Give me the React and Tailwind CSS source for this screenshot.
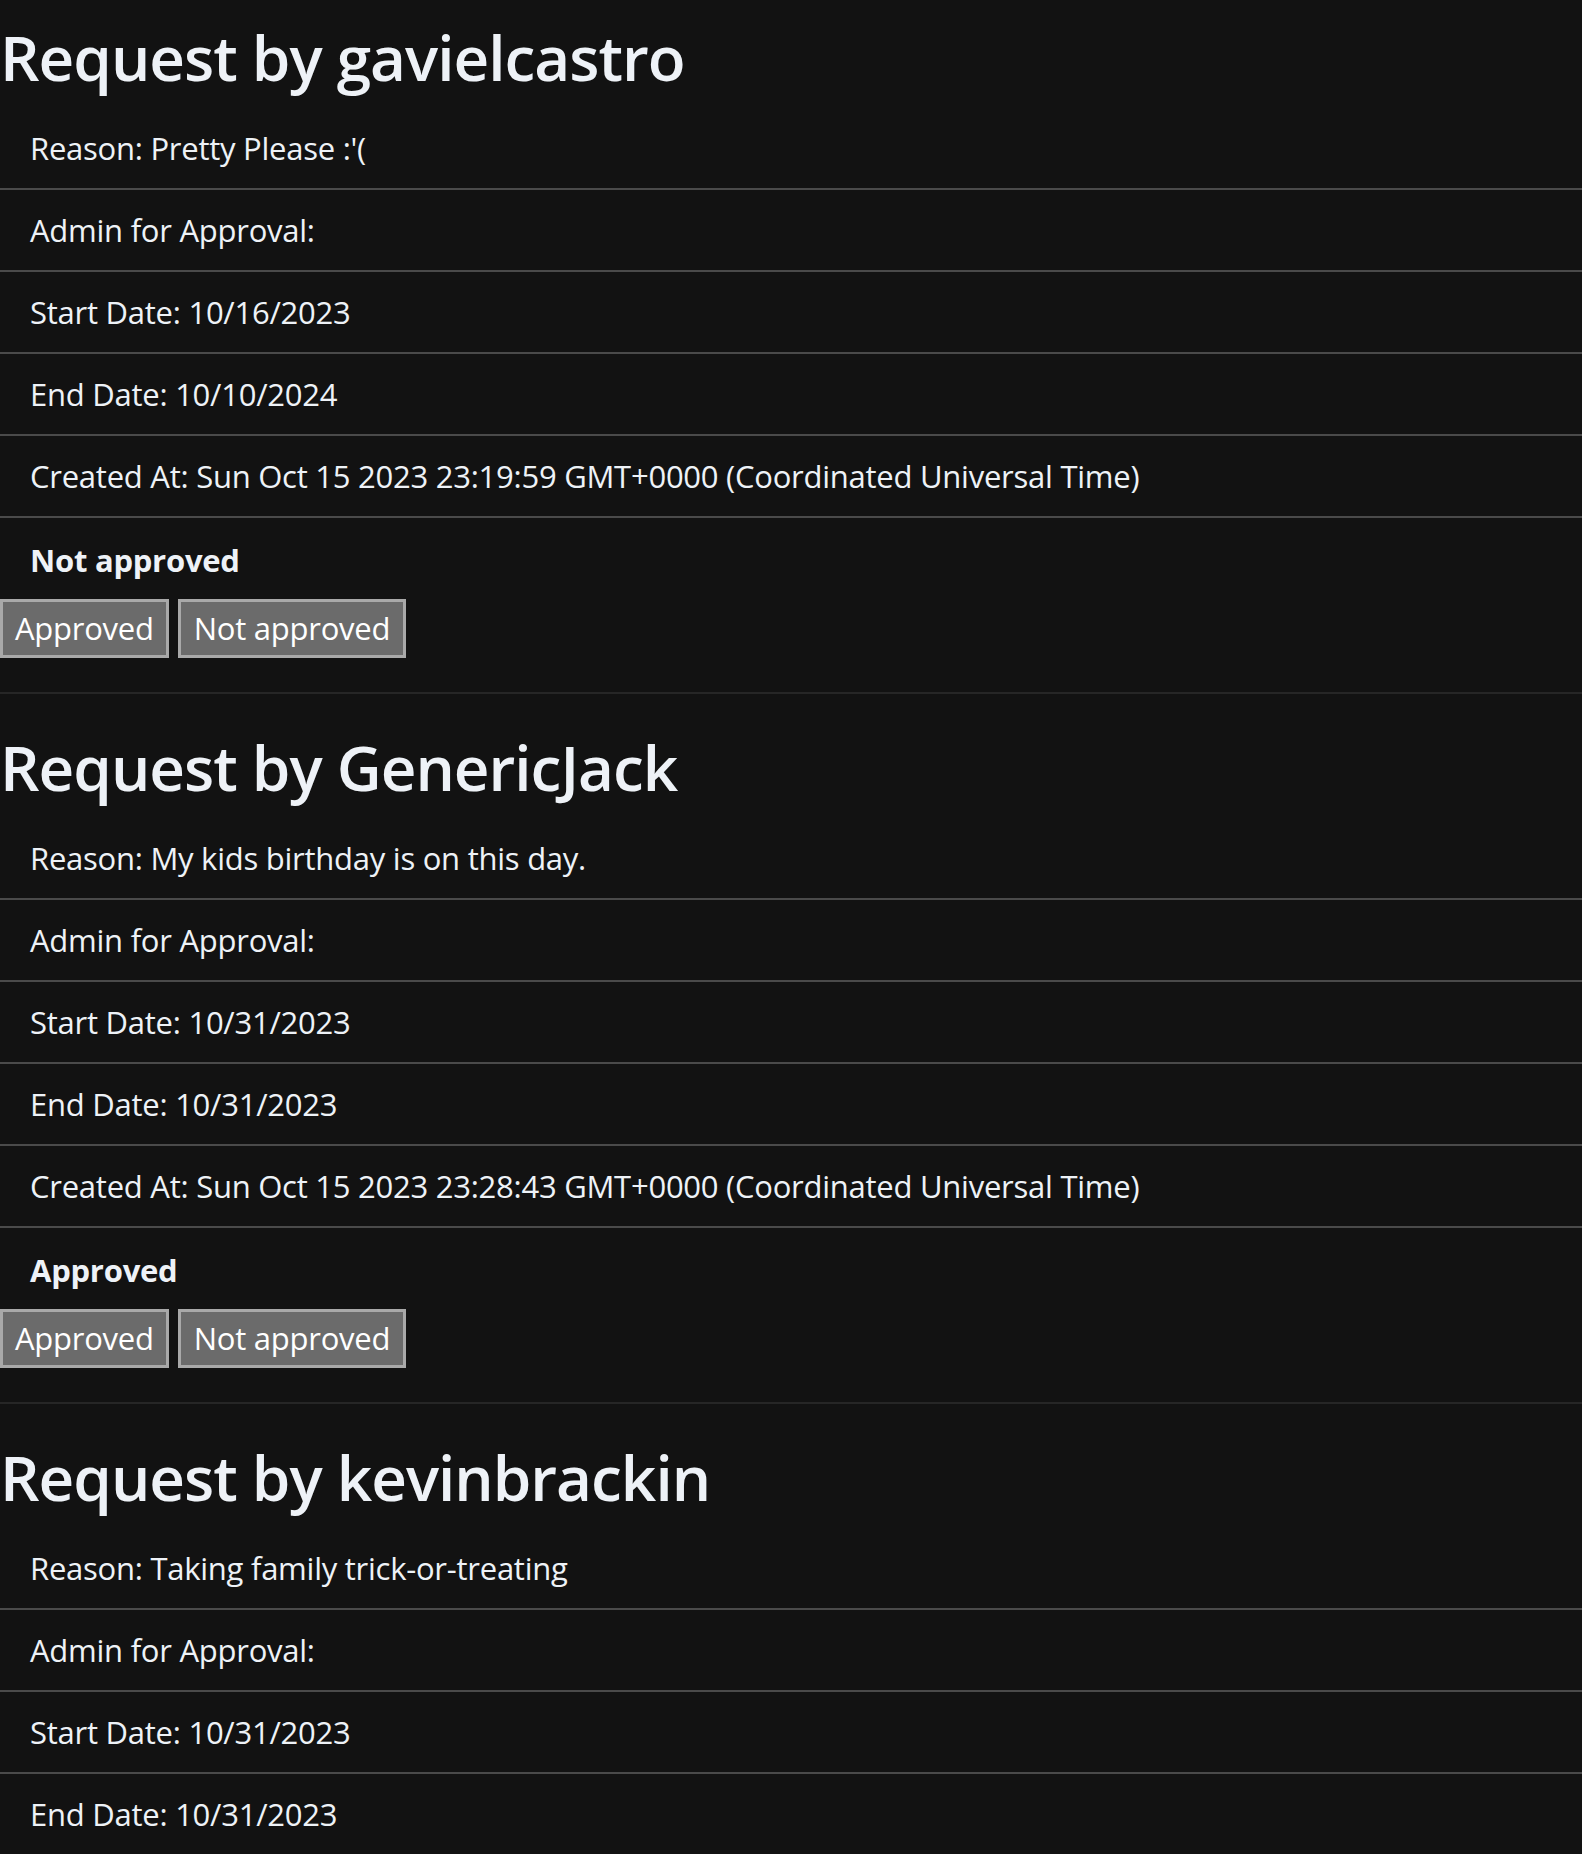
const requests = [
  {
    user: "gavielcastro",
    reason: "Pretty Please :'(",
    start: "10/16/2023",
    end: "10/10/2024",
    created: "Sun Oct 15 2023 23:19:59 GMT+0000 (Coordinated Universal Time)",
    status: "Not approved",
  },
  {
    user: "GenericJack",
    reason: "My kids birthday is on this day.",
    start: "10/31/2023",
    end: "10/31/2023",
    created: "Sun Oct 15 2023 23:28:43 GMT+0000 (Coordinated Universal Time)",
    status: "Approved",
  },
  {
    user: "kevinbrackin",
    reason: "Taking family trick-or-treating",
    start: "10/31/2023",
    end: "10/31/2023",
    created: "Sun Oct 15 2023 23:41:12 GMT+0000 (Coordinated Universal Time)",
    status: "Not approved",
  },
];

function Row({ children }) {
  return (
    <li className="h-[82px] flex items-center px-[30px] border-b-2 border-[#4a4a4a]">
      {children}
    </li>
  );
}

function RequestCard({ req }) {
  return (
    <section className="border-b-2 border-[#262626] mb-[16px]">
      <h1 className="h-[108px] flex items-center pt-[5px] text-[62px] font-semibold leading-none tracking-[-1px]">
        Request by {req.user}
      </h1>
      <ul>
        <Row>Reason: {req.reason}</Row>
        <Row>Admin for Approval:</Row>
        <Row>Start Date: {req.start}</Row>
        <Row>End Date: {req.end}</Row>
        <Row>Created At: {req.created}</Row>
      </ul>
      <div className="pt-[25px] pb-[34px]">
        <p className="px-[30px] h-[56px] font-bold leading-[34px]">{req.status}</p>
        <div className="flex gap-[9px]">
          <button className="h-[59px] px-[12px] bg-[#6b6b6b] border-[3px] border-[#a9a9a9] text-white">
            Approved
          </button>
          <button className="h-[59px] px-[13px] bg-[#6b6b6b] border-[3px] border-[#a9a9a9] text-white">
            Not approved
          </button>
        </div>
      </div>
    </section>
  );
}

export default function App() {
  return (
    <div
      className="min-h-screen bg-[#121212] text-[#eef2f7] text-[31px] tracking-[-0.25px]"
      style={{ fontFamily: '"Open Sans", "Noto Sans", sans-serif' }}
    >
      {requests.map((req) => (
        <RequestCard key={req.user} req={req} />
      ))}
    </div>
  );
}
